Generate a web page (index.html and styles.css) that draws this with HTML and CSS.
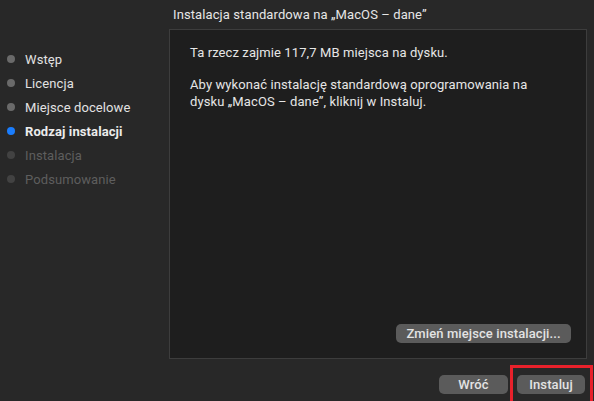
FILE: index.html
```html
<!DOCTYPE html>
<html lang="pl">
<head>
<meta charset="utf-8">
<link rel="stylesheet" href="styles.css">
</head>
<body>
<div class="window">
  <ul class="steps">
    <li class="step done"><span class="dot"></span>Wstęp</li>
    <li class="step done"><span class="dot"></span>Licencja</li>
    <li class="step done"><span class="dot"></span>Miejsce docelowe</li>
    <li class="step current"><span class="dot"></span>Rodzaj instalacji</li>
    <li class="step todo"><span class="dot"></span>Instalacja</li>
    <li class="step todo"><span class="dot"></span>Podsumowanie</li>
  </ul>
  <div class="main">
    <div class="title">Instalacja standardowa na „MacOS – dane”</div>
    <div class="panel">
      <p class="para">Ta rzecz zajmie 117,7 MB miejsca na dysku.</p>
      <p class="para">Aby wykonać instalację standardową oprogramowania na dysku „MacOS – dane”, kliknij w Instaluj.</p>
      <button class="btn change">Zmień miejsce instalacji...</button>
    </div>
    <div class="footer">
      <button class="btn back">Wróć</button>
      <button class="btn install">Instaluj</button>
    </div>
  </div>
</div>
<div class="highlight"></div>
</body>
</html>
```
FILE: styles.css
```css
html, body {
  margin: 0;
  padding: 0;
  background: #282828;
  width: 594px;
  height: 401px;
  overflow: hidden;
  font-family: Roboto, "Liberation Sans", sans-serif;
  font-size: 13px;
  letter-spacing: 0.1px;
  color: #e4e4e4;
}
.window {
  display: grid;
  grid-template-columns: 169px 418px;
  height: 401px;
}
.steps {
  list-style: none;
  margin: 0;
  padding: 47px 0 0 0;
}
.step {
  display: flex;
  align-items: center;
  height: 24px;
  padding-left: 7px;
  color: #e2e2e2;
}
.dot {
  width: 8px;
  height: 8px;
  border-radius: 50%;
  background: #6a6a6a;
  margin-right: 10px;
}
.step.current {
  font-weight: bold;
  color: #ececec;
}
.step.current .dot { background: #1a7dfd; }
.step.todo { color: #5e5e5e; }
.step.todo .dot { background: #424242; }
.main {
  display: flex;
  flex-direction: column;
}
.title {
  height: 29px;
  line-height: 29px;
  padding-left: 4px;
  color: #e6e6e6;
}
.panel {
  height: 330px;
  box-sizing: border-box;
  border: 1px solid #3d3d3d;
  background: #1e1e1e;
  padding: 14px 15px 15px 20px;
  display: flex;
  flex-direction: column;
}
.para {
  margin: 0 0 15px 0;
  line-height: 17px;
  color: #e6e6e6;
  max-width: 350px;
}
.btn {
  font-family: Roboto, "Liberation Sans", sans-serif;
  font-size: 13px;
  font-weight: 500;
  letter-spacing: 0.1px;
  color: #e3e3e3;
  background: #5b5b5b;
  border: none;
  border-radius: 5px;
  height: 19px;
  padding: 0;
  line-height: 19px;
}
.change {
  margin-top: auto;
  align-self: flex-end;
  width: 175px;
}
.footer {
  display: flex;
  justify-content: flex-end;
  gap: 9px;
  padding: 16px 2px 0 0;
}
.back { width: 69px; }
.install { width: 68px; }
.highlight {
  position: absolute;
  left: 510px;
  top: 365px;
  width: 77px;
  height: 34px;
  border: 3px solid #e8212b;
}
```
